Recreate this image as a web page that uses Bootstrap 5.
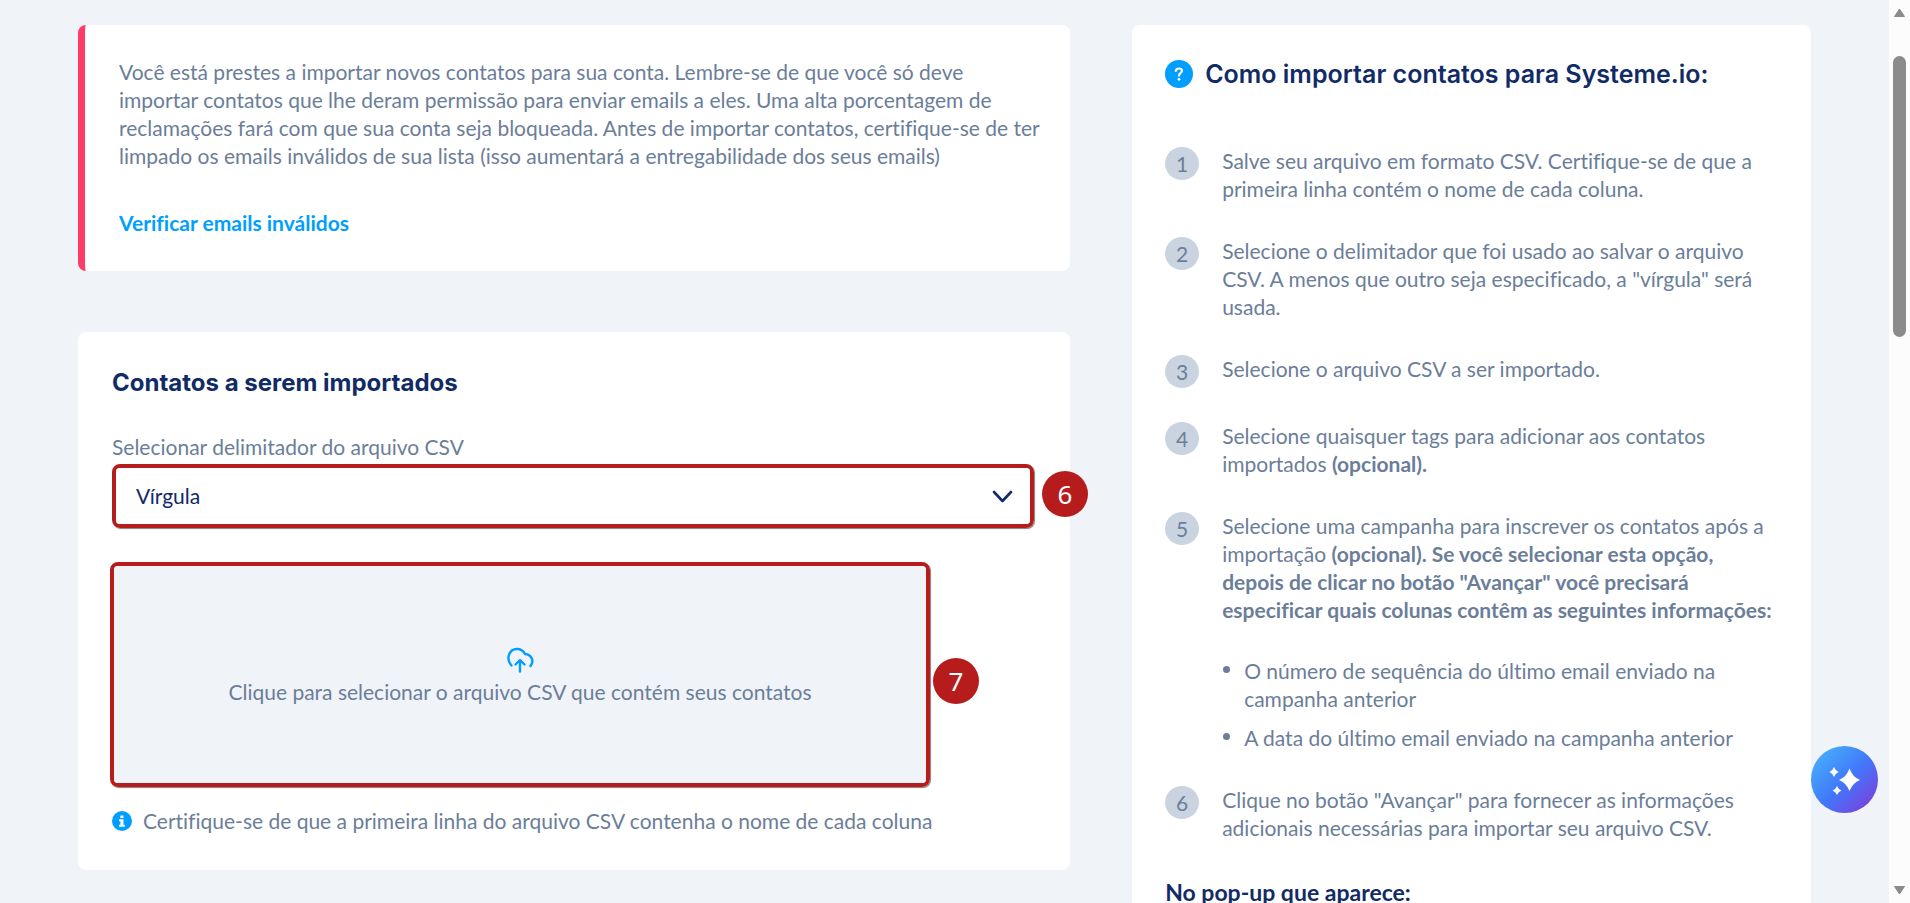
<!DOCTYPE html>
<html lang="pt-BR">
<head>
<meta charset="utf-8">
<meta name="viewport" content="width=device-width, initial-scale=1">
<title>Importar contatos</title>
<link href="https://cdn.jsdelivr.net/npm/bootstrap@5.3.0/dist/css/bootstrap.min.css" rel="stylesheet">
<style>
  :root { --ink: #112b66; --muted: #6b7e99; --accent: #009fff; --pink: #ff3b69; --canvas: #f0f3f8; --mark: #b71c1c; }
  body { background: var(--canvas); color: var(--muted); font-family: Lato, "Liberation Sans", sans-serif; font-size: 21px; line-height: 28px; font-variant-ligatures: none; }
  .viewport { height: 100vh; overflow: hidden; }
  .page-grid { display: grid; grid-template-columns: 19fr 13fr; gap: 62px; padding: 25px 78px; align-items: start; }
  @media (max-width: 1100px) { .page-grid { grid-template-columns: 1fr; padding: 25px; } .viewport { height: auto; } }
  .panel { background: #fff; border-radius: 8px; }
  .panel-warning { border-left: 7px solid var(--pink); padding: 33px 23px 34px 34px; }
  .panel-form { padding: 35px 34px; }
  .panel-help { padding: 33px; }
  .left-stack { gap: 61px; }
  .check-link { color: var(--accent); font-weight: 700; text-decoration: none; margin-top: 39px; }
  h2, h3 { font-family: Inter, "Liberation Sans", sans-serif; color: var(--ink); font-size: 24px; line-height: 32px; font-weight: 700; margin: 0; }
  .help-title { font-size: 25px; font-weight: 600; }
  .help-head { gap: 12px; }
  .help-sub { font-family: Lato, "Liberation Sans", sans-serif; font-size: 23px; margin-top: 34px; }
  .delimiter-label { margin: 34px 0 3px; }
  .marked { position: relative; border: 4px solid var(--mark); border-radius: 8px; box-shadow: 1px 1px 1px rgba(0,0,0,.5); }
  .marked-select { width: 922px; max-width: 100%; }
  .marked-drop { width: 820px; max-width: 100%; margin-left: -2px; margin-top: 34px; }
  .form-select.delimiter { border: 0; border-radius: 4px; color: var(--ink); font-size: 21px; line-height: 28px; padding: 14px 48px 14px 20px; background-image: none; }
  .chevron { position: absolute; right: 17px; top: 22px; pointer-events: none; }
  .marker { position: absolute; width: 46px; height: 46px; background: var(--mark); color: #fff; font: 26px/46px "Noto Sans", sans-serif; text-align: center; left: 100%; transform: translateY(-50%); }
  .marker-select { margin-left: 12px; top: 47%; }
  .marker-drop { margin-left: 7px; top: 53%; }
  .dropzone { width: 100%; height: 217px; padding: 4px 0 0; border: 0; border-radius: 4px; background: var(--canvas); color: var(--muted); gap: 5px; }
  .file-hint { gap: 11px; margin: 20px 0 0; }
  .steps { gap: 34px; margin: 57px 0 0; }
  .steps > li { gap: 23px; }
  .step-no { flex: none; width: 34px; height: 33px; background: #cad4e1; text-align: center; line-height: 33px; }
  .sublist { margin: 33px 0 0; gap: 11px; }
  .sublist li { gap: 14px; }
  .sublist li::before { content: ""; flex: none; width: 7px; height: 7px; margin: 9px 0 0 1px; border-radius: 50%; background: var(--muted); }
  .assistant { position: absolute; right: 11px; bottom: 90px; width: 67px; height: 67px; border: 0; background: linear-gradient(135deg, #48b0fb 8%, #4178fb 52%, #7c3fdc 92%); }
  .scroll-rail { width: 21px; height: 100vh; background: #fcfcfc; padding: 8px 0; }
  .scroll-thumb { width: 13px; height: 281px; margin-top: 39px; border-radius: 7px; background: #8b8b8b; }
</style>
</head>
<body class="d-flex">
<div class="viewport flex-grow-1 position-relative">
  <main class="page-grid">
    <div class="left-stack d-flex flex-column">
      <section class="panel panel-warning">
        <p class="mb-0">Você está prestes a importar novos contatos para sua conta. Lembre-se de que você só deve importar contatos que lhe deram permissão para enviar emails a eles. Uma alta porcentagem de reclamações fará com que sua conta seja bloqueada. Antes de importar contatos, certifique-se de ter limpado os emails inválidos de sua lista (isso aumentará a entregabilidade dos seus emails)</p>
        <a class="check-link d-inline-block" href="#">Verificar emails inválidos</a>
      </section>
      <section class="panel panel-form">
        <h2>Contatos a serem importados</h2>
        <label class="delimiter-label d-block" for="delimiter">Selecionar delimitador do arquivo CSV</label>
        <div class="marked marked-select">
          <select class="form-select delimiter" id="delimiter"><option>Vírgula</option><option>Ponto e vírgula</option></select>
          <svg class="chevron" width="21" height="14" viewBox="0 0 21 14" fill="none" stroke="#112b66" stroke-width="2.600" stroke-linecap="round" stroke-linejoin="round"><path d="M2 2l8.500 9L19 2"/></svg>
          <span class="marker marker-select rounded-circle">6</span>
        </div>
        <div class="marked marked-drop">
          <button class="dropzone d-flex flex-column align-items-center justify-content-center" type="button">
            <svg width="28" height="26" viewBox="0 0 28 26" fill="none" stroke="#009fff" stroke-width="2.400" stroke-linecap="round" stroke-linejoin="round"><path d="M5.500 18.500C-.5 12 3 2 11 2c4 0 6.500 2 8 5C25.500 7.500 28.500 14 24.500 19M14 24.500V13.500M9.500 17.500L14 13L18.500 17.500"/></svg>
            <span>Clique para selecionar o arquivo CSV que contém seus contatos</span>
          </button>
          <span class="marker marker-drop rounded-circle">7</span>
        </div>
        <p class="file-hint d-flex align-items-center">
          <svg class="flex-shrink-0" width="20" height="20" viewBox="0 0 20 20"><circle cx="10" cy="10" r="10" fill="#009fff"/><path fill="#fff" d="M8.400 4.500h3v2.600h-3zM7 8.300h4.500v5.400h1.300v2H7v-2h1.400v-3.400H7z"/></svg>
          <span>Certifique-se de que a primeira linha do arquivo CSV contenha o nome de cada coluna</span>
        </p>
      </section>
    </div>
    <aside class="panel panel-help">
      <div class="help-head d-flex align-items-center">
        <svg class="flex-shrink-0" width="28" height="28" viewBox="0 0 28 28"><circle cx="14" cy="14" r="14" fill="#009fff"/><path d="M10.800 11c.3-3.400 6.500-3.300 6.200 0-.2 2-3 2-3 4.700" fill="none" stroke="#fff" stroke-width="2.200" stroke-linecap="round"/><circle cx="14" cy="19.300" r="1.400" fill="#fff"/></svg>
        <h2 class="help-title">Como importar contatos para Systeme.io:</h2>
      </div>
      <ol class="steps list-unstyled d-flex flex-column">
        <li class="d-flex"><span class="step-no rounded-circle">1</span><div>Salve seu arquivo em formato CSV. Certifique-se de que a primeira linha contém o nome de cada coluna.</div></li>
        <li class="d-flex"><span class="step-no rounded-circle">2</span><div>Selecione o delimitador que foi usado ao salvar o arquivo CSV. A menos que outro seja especificado, a "vírgula" será usada.</div></li>
        <li class="d-flex"><span class="step-no rounded-circle">3</span><div>Selecione o arquivo CSV a ser importado.</div></li>
        <li class="d-flex"><span class="step-no rounded-circle">4</span><div>Selecione quaisquer tags para adicionar aos contatos importados <b>(opcional).</b></div></li>
        <li class="d-flex"><span class="step-no rounded-circle">5</span><div>Selecione uma campanha para inscrever os contatos após a importação <b>(opcional). Se você selecionar esta opção, depois de clicar no botão "Avançar" você precisará especificar quais colunas contêm as seguintes informações:</b>
          <ul class="sublist list-unstyled d-flex flex-column">
            <li class="d-flex"><span>O número de sequência do último email enviado na campanha anterior</span></li>
            <li class="d-flex"><span>A data do último email enviado na campanha anterior</span></li>
          </ul></div></li>
        <li class="d-flex"><span class="step-no rounded-circle">6</span><div>Clique no botão "Avançar" para fornecer as informações adicionais necessárias para importar seu arquivo CSV.</div></li>
      </ol>
      <h3 class="help-sub">No pop-up que aparece:</h3>
    </aside>
  </main>
  <button class="assistant rounded-circle d-flex align-items-center justify-content-center p-0" type="button" aria-label="Assistente">
    <svg width="32" height="32" viewBox="0 0 32 32" fill="#fff"><path d="M20.500 4.500q3 8.500 10.500 11.500q-7.500 3-10.500 11q-3-8-10.500-11q7.500-3 10.500-11.500zM5 3q1.300 3.600 4.500 5q-3.200 1.400-4.500 5q-1.300-3.600-4.500-5q3.200-1.400 4.500-5zM8 22q1.200 3.300 4.500 4.500q-3.300 1.200-4.500 4.500q-1.200-3.300-4.500-4.500q3.300-1.200 4.500-4.500z"/></svg>
  </button>
</div>
<div class="scroll-rail d-flex flex-column align-items-center flex-shrink-0">
  <svg width="11" height="9" viewBox="0 0 11 9"><path d="M5.500 1L10.500 8.500H.5z" fill="#8b8b8b" stroke="#8b8b8b" stroke-linejoin="round"/></svg>
  <div class="scroll-thumb"></div>
  <svg class="mt-auto" width="11" height="9" viewBox="0 0 11 9"><path d="M5.500 8L.5.500h10z" fill="#8b8b8b" stroke="#8b8b8b" stroke-linejoin="round"/></svg>
</div>
<script src="https://cdn.jsdelivr.net/npm/bootstrap@5.3.0/dist/js/bootstrap.bundle.min.js"></script>
</body>
</html>
